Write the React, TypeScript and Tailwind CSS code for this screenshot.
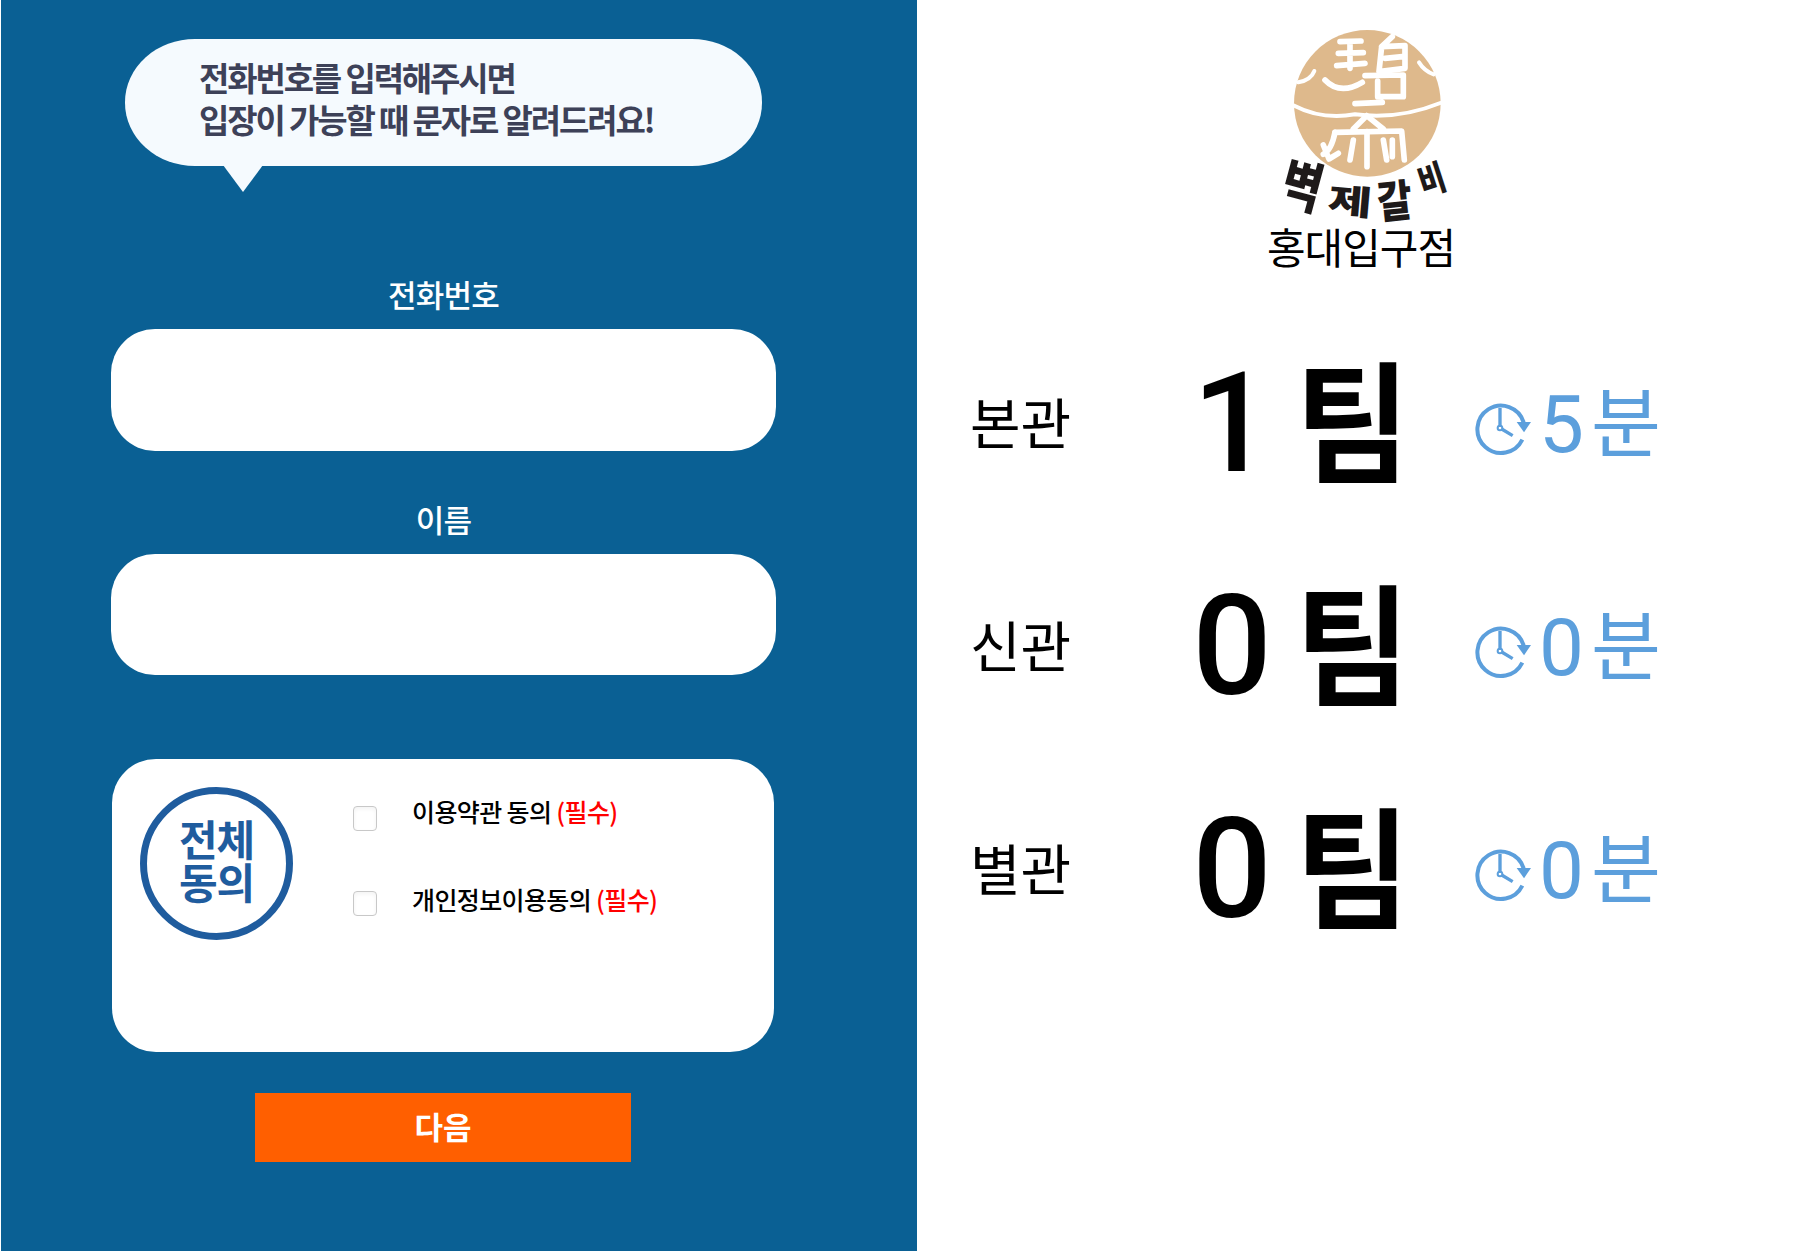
import React from 'react';

const KR = 'font-["Noto_Sans_CJK_KR","Noto_Sans",sans-serif]';
const NUM = 'font-["Roboto","Noto_Sans_CJK_KR",sans-serif]';

const ClockIcon = () => (
  <svg width="58" height="58" viewBox="30 25 174 174" fill="none" stroke="#5c9fdc" strokeWidth="12" className="shrink-0">
    <path d="M176 98 A71 71 0 1 0 172 150" />
    <path d="M155 97 L198 97 L177 128 Z" fill="#5c9fdc" stroke="none" />
    <path d="M105 55 L105 112 M110 118 L143 138" strokeWidth="10" />
    <circle cx="105" cy="115" r="7" strokeWidth="6" />
  </svg>
);

// seal mark + brush wordmark, traced from the zoomed logo
const Logo = () => (
  <svg width="190" height="200" viewBox="0 0 190 200" className="block shrink-0">
    <g transform="translate(15 0) scale(0.3333)" fill="none" stroke="#fff" strokeLinecap="round" strokeLinejoin="round">
      <circle cx="247" cy="235" r="220" fill="#deb98c" stroke="none" />
      <g strokeWidth="17">
        <path d="M165 50 L228 48 M195 50 L195 130 M160 85 L235 83 M155 122 L240 115" />
        <path d="M120 165 Q165 212 232 172" />
        <path d="M322 35 L290 65 L360 62 L360 130 L282 140 L290 65 M300 100 L352 95" />
        <path d="M240 152 L355 150 L355 215 L278 215 L278 168 M210 236 L292 232" />
      </g>
      <g strokeWidth="12">
        <path d="M28 242 Q110 285 210 268 Q340 285 466 234" />
        <path d="M40 172 Q78 165 88 138 M446 148 Q418 138 402 112" />
      </g>
      <g strokeWidth="17">
        <path d="M245 272 L205 312 M245 272 L295 312 M150 322 L350 318 L358 405" />
        <path d="M150 322 Q140 375 115 388 M115 360 L132 402 L160 385" />
        <path d="M246 320 L246 425 M205 345 L195 405 M295 345 L305 405 M322 345 L322 395" />
      </g>
    </g>
    <g fill="#1e1a1a" textAnchor="middle" fontFamily="Noto Sans CJK KR, sans-serif" fontWeight="900">
      <text transform="translate(32 162) rotate(15) scale(0.95 1.2)" y="16" fontSize="46">벽</text>
      <text transform="translate(80 177) rotate(5) scale(1.2 0.85)" y="14" fontSize="40">제</text>
      <text transform="translate(125 178) rotate(-6) scale(0.95 1.1)" y="13" fontSize="40">갈</text>
      <text transform="translate(162 155) rotate(-18) scale(0.85 1.05)" y="12" fontSize="34">비</text>
    </g>
  </svg>
);

const StatusRow = ({ name, teams, minutes }: { name: string; teams: string; minutes: string }) => (
  <div className="flex h-[223px] items-center">
    <div className="w-[100px] whitespace-nowrap text-[55px] leading-none text-black">{name}</div>
    <div className={`ml-[120px] mt-[4px] flex w-[84px] justify-center text-[140px] font-medium leading-none text-black ${NUM}`}>{teams}</div>
    <div className="-mt-[12px] ml-[21px] w-[175px] scale-y-105 text-[125px] font-bold leading-none text-black">팀</div>
    <div className="ml-[5px] mt-[12px]"><ClockIcon /></div>
    <div className="ml-[6px] flex items-center text-[76px] leading-none text-[#5c9fdc]">
      <span className={`mt-[8px] w-[52px] text-[80px] ${NUM}`}>{minutes}</span>
      <span className="-mt-[6px]">분</span>
    </div>
  </div>
);

const FieldLabel = ({ children }: { children: React.ReactNode }) => (
  <label className="block text-center text-[31px] font-medium leading-none tracking-tight text-white">{children}</label>
);

const AgreeItem = ({ label, className, boxClass }: { label: string; className: string; boxClass: string }) => (
  <label className={`flex items-center ${className}`}>
    <input type="checkbox" className={`h-[25px] w-[24px] appearance-none rounded-[4px] border border-[#c8c8c8] bg-white shadow-inner ${boxClass}`} />
    <span className="-mt-[10px] ml-[35px] text-[25px] font-medium tracking-tight text-black">
      {label} <span className="text-[#ff0000]">(필수)</span>
    </span>
  </label>
);

export default function App() {
  return (
    <div className={`flex h-[1251px] w-[1810px] overflow-hidden bg-white pl-px ${KR}`}>
      <div className="w-[916px] shrink-0 bg-[#0a6094] pt-[39px]">
        <div className="relative ml-[124px] flex h-[127px] w-[637px] flex-col justify-center rounded-[70px/63px] bg-[#f5fafe] pb-[10px] pl-[74px] text-[33px] font-bold leading-[42px] tracking-[-0.065em] text-[#3d4158]">
          <p>전화번호를 입력해주시면</p>
          <p>입장이 가능할 때 문자로 알려드려요!</p>
          <div className="absolute left-[98px] top-[126px] h-0 w-0 border-x-[20px] border-t-[27px] border-x-transparent border-t-[#f5fafe]" />
        </div>

        <div className="ml-[110px] mt-[112px] w-[665px]">
          <FieldLabel>전화번호</FieldLabel>
          <input className="mt-[20px] block h-[122px] w-full rounded-[44px] bg-white" />
          <div className="mt-[52px]"><FieldLabel>이름</FieldLabel></div>
          <input className="mt-[20px] block h-[121px] w-full rounded-[44px] bg-white" />

          <div className="ml-px mt-[84px] flex h-[293px] w-[662px] rounded-[44px] bg-white pl-[28px] pt-[28px]">
            <div className="flex h-[153px] w-[153px] shrink-0 flex-col items-center justify-center rounded-full border-[7px] border-[#1f5c9e] pb-[10px] text-[42px] font-bold leading-[43px] tracking-tight text-[#1f5c9e]">
              <span>전체</span>
              <span>동의</span>
            </div>
            <div className="ml-[60px] pt-[15px]">
              <AgreeItem label="이용약관 동의" className="" boxClass="mt-[4px]" />
              <AgreeItem label="개인정보이용동의" className="mt-[60px]" boxClass="-mt-[2px]" />
            </div>
          </div>

          <button className="ml-[144px] mt-[41px] block h-[69px] w-[376px] bg-[#ff5f00] pb-[3px] text-[31px] font-bold text-white">다음</button>
        </div>
      </div>

      <div className="flex-1 pl-[53px]">
        <div className="ml-[300px] flex h-[276px] w-[190px] flex-col items-center pt-[25px]">
          <Logo />
          <div className="-ml-[8px] whitespace-nowrap text-[42px] leading-none tracking-tight text-black">홍대입구점</div>
        </div>
        <div className="pt-[33px]">
          <StatusRow name="본관" teams="1" minutes="5" />
          <StatusRow name="신관" teams="0" minutes="0" />
          <StatusRow name="별관" teams="0" minutes="0" />
        </div>
      </div>
    </div>
  );
}
